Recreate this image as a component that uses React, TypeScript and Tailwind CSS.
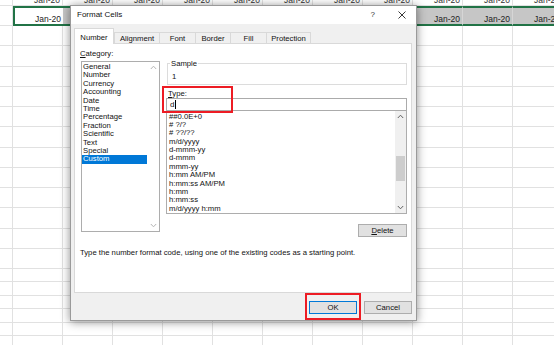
import React from 'react';

const COLS = [13, 50, 50, 50, 50, 50, 50, 50, 50, 50, 50, 50];

const CATEGORIES = [
  'General', 'Number', 'Currency', 'Accounting', 'Date', 'Time',
  'Percentage', 'Fraction', 'Scientific', 'Text', 'Special', 'Custom',
];

const FORMATS = [
  '##0.0E+0', '# ?/?', '# ??/??', 'm/d/yyyy', 'd-mmm-yy', 'd-mmm', 'mmm-yy',
  'h:mm AM/PM', 'h:mm:ss AM/PM', 'h:mm', 'h:mm:ss', 'm/d/yyyy h:mm',
];

const TABS = [
  { label: 'Number', w: 'w-[40px]', active: true },
  { label: 'Alignment', w: 'w-[46px]' },
  { label: 'Font', w: 'w-[37px]' },
  { label: 'Border', w: 'w-[36px]' },
  { label: 'Fill', w: 'w-[37px]' },
  { label: 'Protection', w: 'w-[45px]' },
];

export default function App() {
  return (
    <div className="relative w-[554px] h-[345px] overflow-hidden bg-white font-['Liberation_Sans',Arial,sans-serif] text-black">
      <Sheet />
      <FormatCellsDialog />
      {/* red highlight boxes */}
      <div className="absolute left-[162px] top-[86px] w-[71px] h-[27px] border-2 border-[#ed1c24]" />
      <div className="absolute left-[305px] top-[293px] w-[56px] h-[27px] border-2 border-[#ed1c24]" />
    </div>
  );
}

function Sheet() {
  return (
    <div className="flex flex-col -mt-[14px]">
      <SheetRow h="h-[20px]" text />
      <SelectedRow />
      {Array.from({ length: 12 }).map((_, i) => (
        <SheetRow key={`a${i}`} h="h-[20.25px]" />
      ))}
      {Array.from({ length: 7 }).map((_, i) => (
        <SheetRow key={`b${i}`} h="h-[13.4px]" />
      ))}
    </div>
  );
}

function SheetRow({ h, text }: { h: string; text?: boolean }) {
  return (
    <div className={`flex shrink-0 ${h}`}>
      {COLS.map((w, i) => (
        <div
          key={i}
          style={{ width: w }}
          className="shrink-0 box-border border-r border-b border-[#e1e1e1] flex items-end justify-end pr-[2px] text-[8.5px] leading-[10px] text-[#333]"
        >
          {text && i > 0 ? 'Jan-20' : ''}
        </div>
      ))}
    </div>
  );
}

function SelectedRow() {
  return (
    <div className="flex shrink-0 h-[20px]">
      {COLS.map((w, i) => {
        let cls = 'border-r border-b border-[#e1e1e1]';
        if (i === 1) cls = 'bg-white border-y-2 border-l-2 border-[#217346]';
        if (i > 1) cls = 'bg-[#c6c6c6] border-y-2 border-y-[#217346] border-r border-r-[#d6d6d6]';
        return (
          <div
            key={i}
            style={{ width: w }}
            className={`shrink-0 box-border flex items-end justify-end pr-[2px] text-[8.5px] leading-[10px] text-[#222] ${cls}`}
          >
            {i > 0 ? 'Jan-20' : ''}
          </div>
        );
      })}
    </div>
  );
}

function FormatCellsDialog() {
  return (
    <div className="absolute left-[70px] top-[5px] w-[347px] h-[316px] flex flex-col bg-[#f0f0f0] border border-[#9a9a9a] shadow-[0_1px_9px_rgba(0,0,0,0.45)]">
      {/* title bar */}
      <div className="h-[18px] bg-white flex items-center pl-[6px] pr-[10px] text-[8px] text-[#111]">
        <span>Format Cells</span>
        <span className="ml-auto mr-[23px] text-[8px] text-[#333]">?</span>
        <svg width="8" height="8" viewBox="0 0 8 8" className="text-[#222]">
          <path d="M0.5 0.5 L7.5 7.5 M7.5 0.5 L0.5 7.5" stroke="currentColor" strokeWidth="0.9" />
        </svg>
      </div>

      {/* tabs */}
      <div className="flex items-end ml-[3px] mt-[4px] relative z-10 -mb-px text-[7.7px] leading-[9px] text-[#111]">
        {TABS.map((t, i) =>
          t.active ? (
            <div
              key={t.label}
              className={`${t.w} h-[16px] bg-white border-x border-t border-[#d9d9d9] flex justify-center pt-[4px]`}
            >
              {t.label}
            </div>
          ) : (
            <div
              key={t.label}
              className={`${t.w} h-[12px] bg-[#f0f0f0] border border-[#d9d9d9] ${i > 1 ? '-ml-px' : ''} flex items-center justify-center`}
            >
              {t.label}
            </div>
          )
        )}
      </div>

      {/* tab panel */}
      <div className="ml-[3px] w-[338px] h-[250px] bg-white border border-[#d9d9d9] text-[7.7px] leading-[9px] text-[#111]">
        <div className="flex">
          {/* category */}
          <div className="pl-[5px] pt-[4.5px]">
            <div>
              <u className="underline-offset-1">C</u>ategory:
            </div>
            <div className="mt-[3.5px] ml-[1px] w-[79px] h-[171px] border border-[#adadad] flex">
              <div className="flex-1 flex flex-col pt-[1px] pr-[1px]">
                {CATEGORIES.map((c) => (
                  <div
                    key={c}
                    className={`h-[8.4px] leading-[8.4px] pl-[1px] ${c === 'Custom' ? 'bg-[#0078d7] text-white' : ''}`}
                  >
                    {c}
                  </div>
                ))}
              </div>
              <div className="w-[11px] flex flex-col justify-between items-center py-[3px]">
                <Chevron up color="#b5b5b5" />
                <Chevron color="#b5b5b5" />
              </div>
            </div>
          </div>

          {/* right side */}
          <div className="ml-[6px] pt-[15px] w-[241px] flex flex-col">
            <fieldset className="ml-[1px] w-[240px] border border-[#dcdcdc] pl-[2px] pb-[3.5px]">
              <legend className="px-[1px]">Sample</legend>
              <div className="mt-[3.5px] pl-[2px]">1</div>
            </fieldset>
            <div className="mt-[4px] pl-[2px]">
              <u className="underline-offset-1">T</u>ype:
            </div>
            <div className="h-[13px] border border-[#ababab] flex items-center pl-[3px] text-[8px]">
              d<span className="w-px h-[9px] bg-black ml-[0.5px]" />
            </div>
            <div className="h-[103px] border border-[#adadad] border-t-0 flex overflow-hidden">
              <div className="flex-1 flex flex-col pt-[1.5px] pl-[2px]">
                {FORMATS.map((f) => (
                  <div key={f} className="h-[8.4px] leading-[8.4px] shrink-0">
                    {f}
                  </div>
                ))}
              </div>
              <div className="w-[11px] bg-[#f0f0f0] flex flex-col items-center">
                <div className="h-[11px] flex items-center">
                  <Chevron up color="#606060" />
                </div>
                <div className="mt-[34px] w-[9px] h-[25px] bg-[#cdcdcd]" />
                <div className="mt-auto h-[11px] flex items-center">
                  <Chevron color="#606060" />
                </div>
              </div>
            </div>
            <button className="self-end mt-[10px] w-[49px] h-[13px] bg-[#e1e1e1] border border-[#adadad] text-[7.7px] leading-[9px]">
              <u className="underline-offset-1">D</u>elete
            </button>
          </div>
        </div>
        <div className="mt-[10.5px] pl-[5px]">
          Type the number format code, using one of the existing codes as a starting point.
        </div>
      </div>

      {/* footer */}
      <div className="flex justify-end gap-[7px] pr-[4px] pt-[8px] text-[7.7px] leading-[9px] text-[#111]">
        <button className="w-[48px] h-[13px] bg-[#e1e1e1] border border-[#0078d7]">OK</button>
        <button className="w-[48px] h-[13px] bg-[#e1e1e1] border border-[#adadad]">Cancel</button>
      </div>
    </div>
  );
}

function Chevron({ up, color }: { up?: boolean; color: string }) {
  return (
    <svg width="7" height="5" viewBox="0 0 7 5">
      <path
        d={up ? 'M0.8 4 L3.5 1.2 L6.2 4' : 'M0.8 1 L3.5 3.8 L6.2 1'}
        fill="none"
        stroke={color}
        strokeWidth="1"
      />
    </svg>
  );
}
